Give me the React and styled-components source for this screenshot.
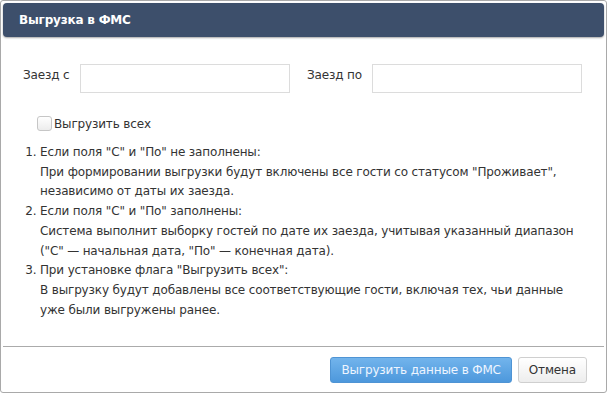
import React from "react";
import styled, { createGlobalStyle } from "styled-components";

const Global = createGlobalStyle`
  html, body { margin: 0; padding: 0; background: #ffffff; }
  body { font-family: "DejaVu Sans", Verdana, sans-serif; }
`;

const Dialog = styled.div`
  box-sizing: border-box;
  width: 607px;
  height: 393px;
  border: 1px solid #a9a9a9;
  border-radius: 3px;
  padding: 2px;
  display: flex;
  flex-direction: column;
  background: #fff;
`;

const Header = styled.div`
  flex-shrink: 0;
  height: 34px;
  background: #3d4f6b;
  border-radius: 4px;
  box-shadow: 0 1px 2px rgba(0,0,0,0.35);
  display: flex;
  align-items: center;
  padding-left: 16px;
  color: #fff;
  font-weight: bold;
  font-size: 12px;
  letter-spacing: -0.2px;
`;

const Body = styled.div`
  flex: 1;
  padding: 27px 24px 0 20px;
  color: #333;
  font-size: 12px;
  letter-spacing: -0.15px;
`;

const FieldsRow = styled.div`
  display: flex;
  align-items: flex-start;
`;

const Field = styled.div`
  display: flex;
  flex-shrink: 0;
  align-items: flex-start;
  margin-left: ${p => p.$ml || 0}px;
`;

const Label = styled.span`
  width: ${p => p.$w}px;
  padding-top: 4px;
  white-space: nowrap;
`;

const Input = styled.input`
  box-sizing: border-box;
  flex-shrink: 0;
  width: 210px;
  height: 29px;
  border: 1px solid #dcdcdc;
  background: #fff;
  outline: none;
`;

const CheckRow = styled.label`
  display: flex;
  align-items: center;
  margin: 23px 0 0 14px;
  gap: 2px;
`;

const Box = styled.span`
  box-sizing: border-box;
  width: 15px;
  height: 15px;
  border: 1px solid #c6c6c6;
  border-radius: 3px;
  background: linear-gradient(#ffffff, #ececec);
`;

const List = styled.ol`
  margin: 12px 0 0 0;
  padding: 0 0 0 17px;
  line-height: 19.7px;
`;

const Sub = styled.div``;

const Footer = styled.div`
  box-sizing: border-box;
  flex-shrink: 0;
  border-top: 1px solid #ababab;
  height: 44px;
  padding: 2px 17px 0 0;
  display: flex;
  align-items: center;
  justify-content: flex-end;
  gap: 6px;
`;

const Button = styled.button`
  box-sizing: border-box;
  height: 26px;
  padding: 0 10px;
  font-family: inherit;
  font-size: 12px;
  letter-spacing: -0.15px;
  border-radius: 3px;
  cursor: pointer;
  border: 1px solid ${p => (p.$primary ? "#4f94d4" : "#cfcfcf")};
  color: ${p => (p.$primary ? "#eef5ff" : "#333")};
  background: ${p =>
    p.$primary
      ? "linear-gradient(#72b4ec, #4d98dc)"
      : "linear-gradient(#ffffff, #ededed)"};
`;

export default function App() {
  return (
    <>
      <Global />
      <Dialog>
        <Header>Выгрузка в ФМС</Header>
        <Body>
          <FieldsRow>
            <Field>
              <Label $w={57}>Заезд с</Label>
              <Input />
            </Field>
            <Field $ml={17}>
              <Label $w={65}>Заезд по</Label>
              <Input />
            </Field>
          </FieldsRow>
          <CheckRow>
            <Box />
            <span>Выгрузить всех</span>
          </CheckRow>
          <List>
            <li>
              Если поля "С" и "По" не заполнены:
              <Sub>При формировании выгрузки будут включены все гости со статусом "Проживает", независимо от даты их заезда.</Sub>
            </li>
            <li>
              Если поля "С" и "По" заполнены:
              <Sub>Система выполнит выборку гостей по дате их заезда, учитывая указанный диапазон ("С" — начальная дата, "По" — конечная дата).</Sub>
            </li>
            <li>
              При установке флага "Выгрузить всех":
              <Sub>В выгрузку будут добавлены все соответствующие гости, включая тех, чьи данные уже были выгружены ранее.</Sub>
            </li>
          </List>
        </Body>
        <Footer>
          <Button $primary>Выгрузить данные в ФМС</Button>
          <Button>Отмена</Button>
        </Footer>
      </Dialog>
    </>
  );
}
